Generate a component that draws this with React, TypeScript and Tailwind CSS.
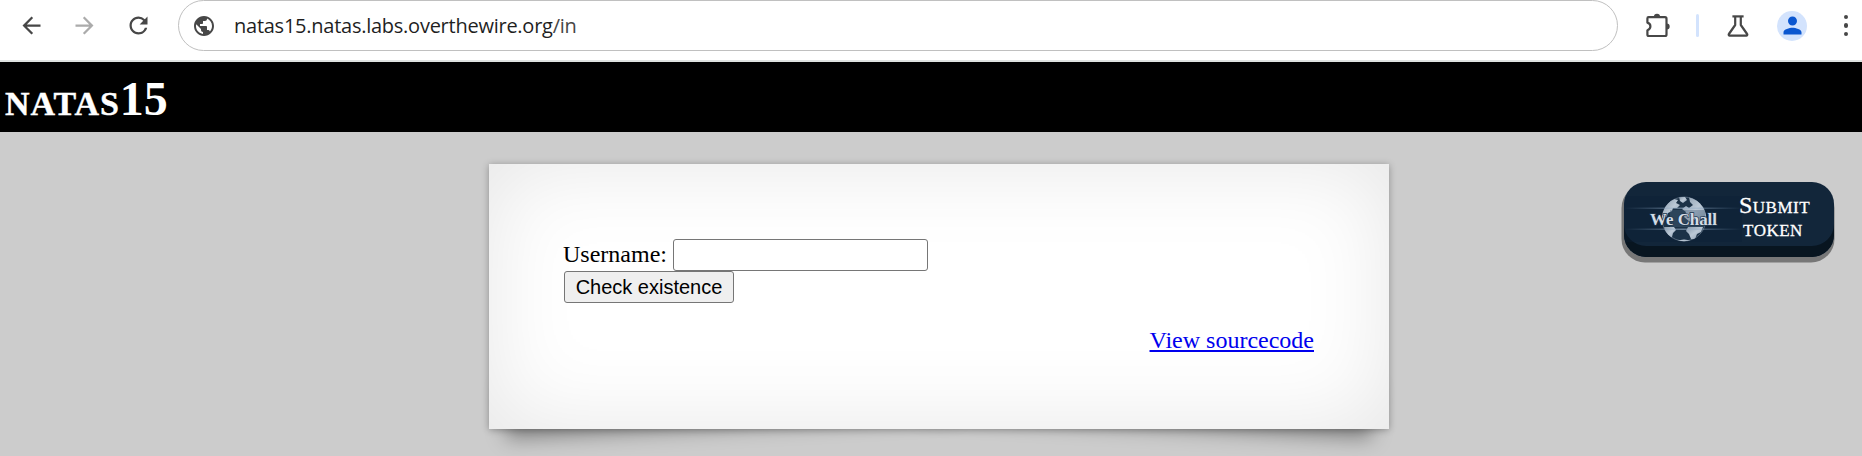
import { MdArrowBack, MdArrowForward, MdPublic, MdRefresh, MdPerson } from "react-icons/md";

function PuzzleIcon() {
  return (
    <svg className="ml-[27px] h-[26px] w-[26px] shrink-0" viewBox="0 0 26 26" fill="none">
      <path
        d="M3.6 4.2H20a1.5 1.5 0 0 1 1.5 1.5V21.5a1.5 1.5 0 0 1-1.5 1.5H3.9A1.5 1.5 0 0 1 2.4 21.5V17.2C4.3 16.6 5.4 15.2 5.4 13.3S4.3 10.2 2.4 9.6V5.4A1.2 1.2 0 0 1 3.6 4.2Z"
        stroke="currentColor"
        strokeWidth="2.2"
        strokeLinejoin="round"
      />
      <path d="M8.9 3.9a3.1 3.1 0 0 1 6.2 0ZM21.8 10.6a2.9 2.9 0 0 1 0 5.8Z" fill="currentColor" />
    </svg>
  );
}

function FlaskIcon() {
  return (
    <svg className="ml-[27px] h-[24px] w-[24px] shrink-0" viewBox="0 0 24 24" fill="none" stroke="currentColor" strokeWidth="2.2" strokeLinejoin="round">
      <path d="M6.4 2.4H17.6" />
      <path d="M9.2 2.8V11L2.9 20a1 1 0 0 0 .9 1.6H20.2a1 1 0 0 0 .9-1.6L14.8 11V2.8" />
    </svg>
  );
}

function Toolbar() {
  return (
    <header className="flex h-[62px] items-start border-b-2 border-[#dfe3e1] bg-white text-[#474747]">
      <div className="flex h-[51px] w-[178px] shrink-0 items-center">
        <MdArrowBack className="ml-[18px] h-[27px] w-[27px]" />
        <MdArrowForward className="ml-[26px] h-[27px] w-[27px] text-[#ababab]" />
        <MdRefresh className="ml-[27px] h-[27px] w-[27px]" />
      </div>
      <div className="flex h-[51px] w-[1440px] shrink-0 items-center rounded-full border border-[#c0c0c0]">
        <MdPublic className="ml-[13px] h-[24px] w-[24px]" />
        <span className="ml-[18px] font-['Open_Sans',sans-serif] text-[20px] tracking-[-0.25px] text-[#1f1f1f]">
          natas15.natas.labs.overthewire.org<span className="text-[#474747]">/in</span>
        </span>
      </div>
      <div className="flex h-[51px] flex-1 items-center">
        <PuzzleIcon />
        <div className="ml-[25px] h-[23px] w-[3px] shrink-0 rounded-full bg-[#d3e3fd]" />
        <FlaskIcon />
        <div className="ml-[27px] flex h-[30px] w-[30px] shrink-0 items-center justify-center rounded-full bg-[#d3e3fd]">
          <MdPerson className="h-[27px] w-[27px] text-[#0b57d0]" />
        </div>
        <div className="ml-[36.5px] flex flex-col gap-[4px]">
          <div className="h-[4.5px] w-[4.5px] rounded-full bg-[#474747]" />
          <div className="h-[4.5px] w-[4.5px] rounded-full bg-[#474747]" />
          <div className="h-[4.5px] w-[4.5px] rounded-full bg-[#474747]" />
        </div>
      </div>
    </header>
  );
}

function WeChallLogo() {
  return (
    <svg className="h-[46px] w-[118px] shrink-0" viewBox="0 2 118 46">
      <defs>
        <linearGradient id="streak" x1="0" x2="1" y1="0" y2="0">
          <stop offset="0" stopColor="#6f8cab" stopOpacity="0" />
          <stop offset=".5" stopColor="#9db4cb" stopOpacity=".6" />
          <stop offset="1" stopColor="#6f8cab" stopOpacity="0" />
        </linearGradient>
        <linearGradient id="land" x1="0" x2="1" y1="0" y2="1">
          <stop offset="0" stopColor="#8799ab" />
          <stop offset=".5" stopColor="#bcc9d6" />
          <stop offset="1" stopColor="#8b9caf" />
        </linearGradient>
        <clipPath id="disc">
          <circle cx="60" cy="25" r="22.3" />
        </clipPath>
      </defs>
      <rect width="118" height="46" y="2" fill="#0c2036" opacity=".35" />
      <circle cx="60" cy="25" r="22" fill="#1c3247" stroke="#6e8092" strokeWidth=".7" />
      <g clipPath="url(#disc)" fill="url(#land)">
        <path d="M38 20 42 11 46 7 50 5 54 6 52 9 56 11 53 14 49 14 48 17 44 19 43 22 38 26Z" />
        <path d="M55 3 61 3 63 6 59 9 56 7Z" />
        <path d="M65 3 72 5 79 11 83 20 82 28 76 30 72 25 66 28 60 23 62 18 58 15 62 12 65 14 69 11 66 8Z" />
        <path d="M40 33H50L52 36 49 39 48 43 44 45 42 39Z" />
        <path d="M64 33H79L77 38 73 40 71 45 67 45 65 40 62 37Z" />
        <path d="M47 44 53 46.5 60 45.5 67 46.5 60 49 50 48Z" />
      </g>
      <rect x="46" y="16" width="35" height="17" fill="#49617a" opacity=".4" />
      <rect x="0" y="13.5" width="118" height="1.5" fill="url(#streak)" />
      <rect x="0" y="34.5" width="118" height="1.5" fill="url(#streak)" />
      <text x="26" y="31" textLength="67" lengthAdjust="spacingAndGlyphs" fontFamily="'Liberation Serif', serif" fontWeight="700" fontSize="17" fill="#d3dce5" stroke="#20364c" strokeWidth="1.4" paintOrder="stroke">
        We Chall
      </text>
    </svg>
  );
}

function SubmitToken() {
  return (
    <div className="mt-[50px] mr-[28px] h-[75px] w-[210px] shrink-0 rounded-[22px] shadow-[-1px_4px_0_1.5px_#777777]">
      <div className="flex h-[75px] items-center overflow-hidden rounded-[22px] bg-[#12263a] pb-[2px] shadow-[inset_0_-11px_0_0_#081520]">
        <WeChallLogo />
        <div className="w-[68px] -ml-[3px] pb-[3px] text-center text-[24px] leading-[23px] tracking-[0.5px] text-white [-webkit-text-stroke:0.3px_white] [font-variant:small-caps]">
          Submit token
        </div>
      </div>
    </div>
  );
}

function Card() {
  return (
    <main className="relative mt-[32px] h-[265px] w-[900px] shrink-0">
      <div className="absolute bottom-[22px] left-[15px] -z-10 h-[53px] w-[450px] -rotate-3 shadow-[0_20px_20px_rgba(0,0,0,0.36)]" />
      <div className="absolute right-[15px] bottom-[22px] -z-10 h-[53px] w-[450px] rotate-3 shadow-[0_20px_20px_rgba(0,0,0,0.36)]" />
      <div className="h-full bg-white px-[75px] pt-[75px] text-[24px] text-black shadow-[0_1px_7px_rgba(0,0,0,0.3),inset_0_0_90px_rgba(0,0,0,0.1)]">
        <form className="-ml-px flex flex-col items-start">
          <label className="flex h-[32px] items-center">
            <span className="-mt-[2px]">Username:</span>
            <input className="ml-[6px] h-[32px] w-[255px] rounded-[3px] border border-[#767676] bg-white px-1" />
          </label>
          <button type="button" className="ml-px flex h-[32px] w-[170px] items-center justify-center rounded-[3px] border border-[#767676] bg-[#efefef] font-['Liberation_Sans',sans-serif] text-[20px]">
            Check existence
          </button>
        </form>
        <div className="mt-[23px] flex justify-end">
          <a href="#" className="leading-[28px] text-[#0000ee] underline">View sourcecode</a>
        </div>
      </div>
    </main>
  );
}

export default function App() {
  return (
    <div className="isolate h-[456px] w-[1862px] overflow-hidden bg-[#cccccc] font-['Liberation_Serif',serif]">
      <Toolbar />
      <h1 className="h-[70px] bg-black pt-[9px] pl-[5px] text-[48px] leading-[55px] font-bold text-white [font-variant:small-caps]">
        <span className="tracking-[0.9px] [-webkit-text-stroke:0.4px_white]">natas</span>15
      </h1>
      <div className="flex items-start justify-between pl-[489px]">
        <Card />
        <SubmitToken />
      </div>
    </div>
  );
}
